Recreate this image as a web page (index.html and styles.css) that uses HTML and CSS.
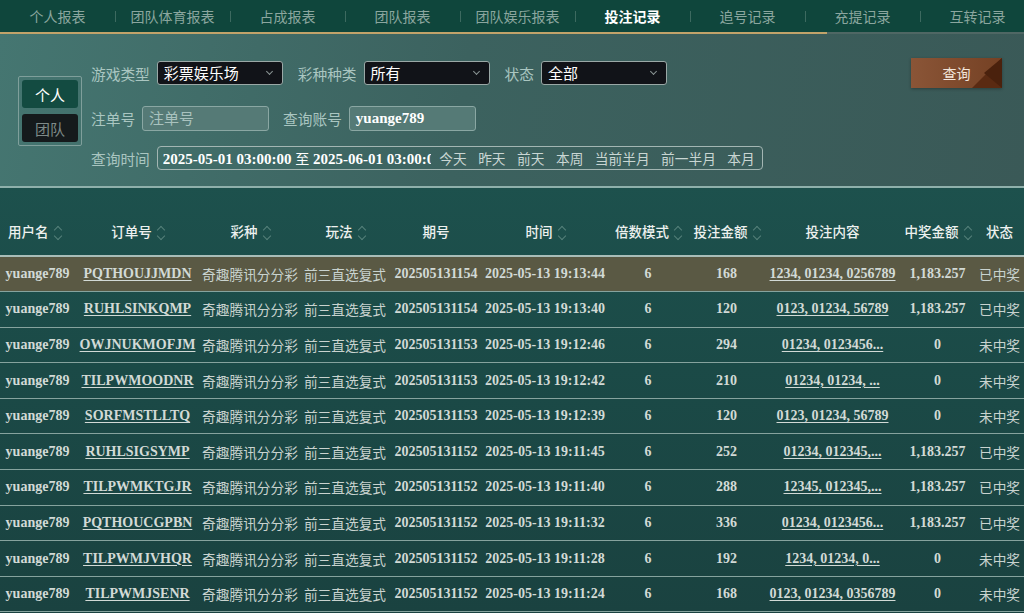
FILE: index.html
```html
<!DOCTYPE html>
<html>
    <head>
        <title>投注记录</title>
        <link rel="stylesheet" href="styles.css">
    </head>
    <body>
        <div class="tabs">
            <a>个人报表</a>
            <a>团队体育报表</a>
            <a>占成报表</a>
            <a>团队报表</a>
            <a>团队娱乐报表</a>
            <a class="active">投注记录</a>
            <a>追号记录</a>
            <a>充提记录</a>
            <a>互转记录</a>
        </div>

        <div class="filter">
            <div class="toggle">
                <button class="on">个人</button>
                <button>团队</button>
            </div>
            <div class="form">
                <div class="row">
                    <label>游戏类型</label>
                    <div class="select">彩票娱乐场</div>
                    <label>彩种种类</label>
                    <div class="select">所有</div>
                    <label>状态</label>
                    <div class="select">全部</div>
                </div>
                <div class="row">
                    <label>注单号</label>
                    <div class="input placeholder">注单号</div>
                    <label>查询账号</label>
                    <div class="input value">yuange789</div>
                </div>
                <div class="row">
                    <label>查询时间</label>
                    <div class="timebox">
                        <div class="range">2025-05-01 03:00:00 <em>至</em> 2025-06-01 03:00:00</div>
                        <span>今天</span>
                        <span>昨天</span>
                        <span>前天</span>
                        <span>本周</span>
                        <span>当前半月</span>
                        <span>前一半月</span>
                        <span>本月</span>
                    </div>
                </div>
            </div>
            <button class="query">查询</button>
        </div>

        <table class="records">
            <colgroup>
                <col style="width:75px"><col style="width:125px"><col style="width:100px"><col style="width:90px">
                <col style="width:92px"><col style="width:126px"><col style="width:80px"><col style="width:77px">
                <col style="width:135px"><col style="width:75px"><col style="width:49px">
            </colgroup>
            <thead>
                <tr>
                    <th>用户名<i class="sort"></i></th>
                    <th>订单号<i class="sort"></i></th>
                    <th>彩种<i class="sort"></i></th>
                    <th>玩法<i class="sort"></i></th>
                    <th>期号</th>
                    <th>时间<i class="sort"></i></th>
                    <th>倍数模式<i class="sort"></i></th>
                    <th>投注金额<i class="sort"></i></th>
                    <th>投注内容</th>
                    <th>中奖金额<i class="sort"></i></th>
                    <th>状态</th>
                </tr>
            </thead>
            <tbody id="rows"></tbody>
        </table>

    <script>
        // 投注数据
        const data = [
            ["PQTHOUJJMDN", "202505131154", "19:13:44", 168, "1234, 01234, 0256789", "1,183.257", "已中奖"],
            ["RUHLSINKQMP", "202505131154", "19:13:40", 120, "0123, 01234, 56789", "1,183.257", "已中奖"],
            ["OWJNUKMOFJM", "202505131153", "19:12:46", 294, "01234, 0123456...", "0", "未中奖"],
            ["TILPWMOODNR", "202505131153", "19:12:42", 210, "01234, 01234, ...", "0", "未中奖"],
            ["SORFMSTLLTQ", "202505131153", "19:12:39", 120, "0123, 01234, 56789", "0", "未中奖"],
            ["RUHLSIGSYMP", "202505131152", "19:11:45", 252, "01234, 012345,...", "1,183.257", "已中奖"],
            ["TILPWMKTGJR", "202505131152", "19:11:40", 288, "12345, 012345,...", "1,183.257", "已中奖"],
            ["PQTHOUCGPBN", "202505131152", "19:11:32", 336, "01234, 0123456...", "1,183.257", "已中奖"],
            ["TILPWMJVHQR", "202505131152", "19:11:28", 192, "1234, 01234, 0...", "0", "未中奖"],
            ["TILPWMJSENR", "202505131152", "19:11:24", 168, "0123, 01234, 0356789", "0", "未中奖"]
        ];
        const tbody = document.querySelector("#rows");
        data.forEach(function (d, i) {
            const tr = document.createElement("tr");
            if (i === 0) tr.className = "hl";
            tr.innerHTML =
                "<td>yuange789</td>" +
                "<td><u>" + d[0] + "</u></td>" +
                "<td class='zh'>奇趣腾讯分分彩</td>" +
                "<td class='zh'>前三直选复式</td>" +
                "<td>" + d[1] + "</td>" +
                "<td>2025-05-13 " + d[2] + "</td>" +
                "<td>6</td>" +
                "<td>" + d[3] + "</td>" +
                "<td><u>" + d[4] + "</u></td>" +
                "<td>" + d[5] + "</td>" +
                "<td class='zh'>" + d[6] + "</td>";
            tbody.appendChild(tr);
        });
    </script>
    </body>
</html>
```

FILE: styles.css
```css
* {
    box-sizing: border-box;
}
body {
    margin: 0;
    width: 1024px;
    height: 613px;
    overflow: hidden;
    background: linear-gradient(180deg, #1f5853 0%, #1b4a47 60%, #1a4240 100%);
    font-family: "Noto Sans CJK SC", sans-serif;
    color: #dfe6e3;
}

/* 顶部标签 */
.tabs {
    display: flex;
    width: 1035px;
    height: 34px;
    background: #0f463c;
    border-bottom: 2px solid;
    border-image: linear-gradient(90deg, #c2a36a 0, #c2a36a 826px, #4f6764 826px) 1;
}
.tabs a {
    flex: 1;
    position: relative;
    text-align: center;
    line-height: 32px;
    font-size: 14px;
    color: #8ba69f;
}
.tabs a + a::before {
    content: "";
    position: absolute;
    left: 0;
    top: 11px;
    height: 11px;
    border-left: 1px solid #3d6a60;
}
.tabs a.active {
    color: #fff;
    font-weight: bold;
}

/* 筛选区 */
.filter {
    display: flex;
    align-items: flex-start;
    height: 154px;
    padding: 27px 22px 0 18px;
    background: linear-gradient(100deg, #457671 0%, #3c625f 45%, #3a5957 100%);
    border-bottom: 2px solid #8fb0ab;
}
.toggle {
    display: flex;
    flex-direction: column;
    gap: 6px;
    margin-top: 15px;
    padding: 3px;
    width: 64px;
    border: 1px solid #7f9f9b;
    border-radius: 2px;
}
.toggle button {
    height: 28px;
    border: none;
    border-radius: 3px;
    background: #151a1c;
    color: #7e8a88;
    font-family: "Noto Sans CJK SC", sans-serif;
    font-size: 15px;
}
.toggle button.on {
    background: #134b41;
    color: #fff;
}
.form {
    margin-left: 9px;
    flex: 1;
}
.row {
    display: flex;
    align-items: center;
    gap: 7px;
}
.row + .row {
    margin-top: 21px;
}
.row:last-child {
    margin-top: 15px;
}
.row label {
    font-size: 14.7px;
    color: #aac6c1;
}
.row .select + label {
    margin-left: 8px;
}
.row .input + label {
    margin-left: 7px;
}
.select {
    position: relative;
    width: 126px;
    height: 24px;
    padding: 0 6px;
    background: #111318;
    border: 1px solid #9aa8a6;
    border-radius: 3px;
    color: #fff;
    font-size: 15px;
    line-height: 21px;
}
.select::after {
    content: "";
    position: absolute;
    right: 10px;
    top: 7px;
    width: 4px;
    height: 4px;
    border-right: 1px solid #8a9493;
    border-bottom: 1px solid #8a9493;
    transform: rotate(45deg);
}
.input {
    width: 127px;
    height: 25px;
    padding: 0 6px;
    background: #557a76;
    border: 1px solid #8aa7a3;
    border-radius: 3px;
    font-size: 15px;
    line-height: 22px;
}
.input.placeholder {
    color: #a9c2be;
}
.input.value {
    color: #fff;
    font-family: "Liberation Serif", serif;
    font-weight: bold;
    font-size: 15px;
}
.timebox {
    display: flex;
    align-items: center;
    gap: 11.5px;
    height: 24px;
    padding: 0 7px 0 5px;
    border: 1px solid #a3b6b3;
    border-radius: 4px;
    font-size: 13.7px;
    color: #c9d6d3;
}
.timebox .range {
    width: 268px;
    overflow: hidden;
    white-space: nowrap;
    color: #fff;
    font-family: "Liberation Serif", serif;
    font-weight: bold;
    font-size: 15px;
    margin-right: -3px;
}
.timebox .range em {
    font-style: normal;
    font-weight: normal;
    font-family: "Noto Sans CJK SC", sans-serif;
    font-size: 14px;
}
.query {
    position: relative;
    overflow: hidden;
    width: 91px;
    height: 30px;
    margin-top: -3px;
    border: none;
    background: linear-gradient(90deg, #8a5537, #754124);
    color: #f3e6dc;
    font-family: "Noto Sans CJK SC", sans-serif;
    font-size: 14px;
    box-shadow: 0 1px 3px rgba(0,0,0,.3);
}
.query::after {
    content: "";
    position: absolute;
    right: 0;
    top: 0;
    width: 30px;
    height: 30px;
    background: #5a2a12;
    clip-path: polygon(100% 0, 100% 100%, 0 100%);
}
.query::before {
    content: "";
    position: absolute;
    right: 0;
    top: 0;
    width: 30px;
    height: 30px;
    background: #4a210d;
    clip-path: polygon(100% 0, 100% 100%, 40% 50%);
    z-index: 1;
}

/* 表格 */
.records {
    width: 1024px;
    table-layout: fixed;
    border-collapse: collapse;
}
.records th {
    height: 68px;
    padding: 0 0 14px;
    vertical-align: bottom;
    text-align: center;
    white-space: nowrap;
    font-size: 13.5px;
    font-weight: 500;
    color: #edf1ef;
    border-bottom: 2px solid #a9bdb8;
}
.records th:first-child {
    text-align: left;
    padding-left: 8px;
}
.sort {
    display: inline-block;
    width: 7px;
    height: 15px;
    margin-left: 5px;
    vertical-align: -3px;
    position: relative;
}
.sort::before,
.sort::after {
    content: "";
    position: absolute;
    left: 1px;
    width: 5px;
    height: 5px;
    border-left: 1px solid #55807a;
    border-top: 1px solid #55807a;
}
.sort::before {
    top: 2px;
    transform: rotate(45deg);
}
.sort::after {
    top: 8px;
    transform: rotate(-135deg);
}
.records td {
    height: 35.6px;
    padding: 0;
    text-align: center;
    white-space: nowrap;
    overflow: hidden;
    font-family: "Liberation Serif", serif;
    font-weight: bold;
    font-size: 14px;
    color: #d2dad6;
    border-bottom: 1.5px solid #86a39e;
}
.records td.zh {
    font-family: "Noto Sans CJK SC", sans-serif;
    font-weight: normal;
    font-size: 13.7px;
    color: #c9d3cf;
}
.records td u {
    text-underline-offset: 2px;
}
.records tr.hl td {
    background: #5a5944;
}
```
